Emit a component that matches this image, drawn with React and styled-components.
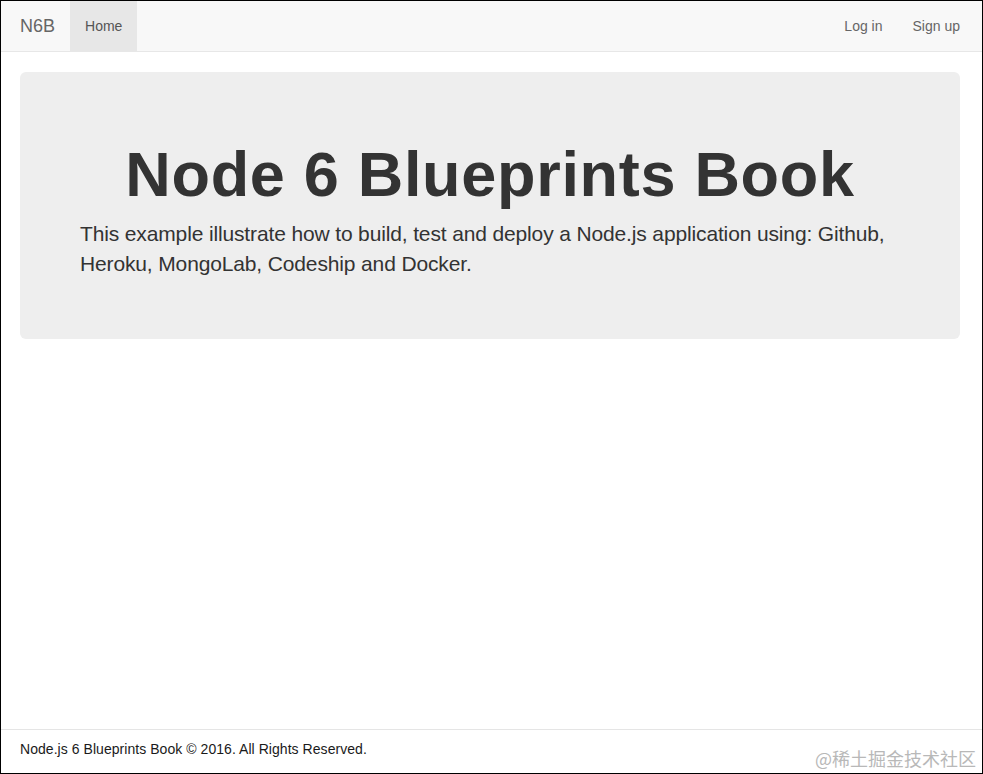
import React from "react"
import styled, { createGlobalStyle } from "styled-components"

const GlobalStyle = createGlobalStyle`
  html, body {
    margin: 0;
    padding: 0;
  }
  body {
    font-family: "Liberation Sans", Arial, sans-serif;
    font-size: 14px;
    line-height: 1.42857;
    color: #333;
    background: #fff;
  }
  * {
    box-sizing: border-box;
  }
`

const navLeft = [{ id: 0, label: "Home", active: true }]
const navRight = [
  { id: 1, label: "Log in" },
  { id: 2, label: "Sign up" },
]

const App = () => {
  return (
    <Page>
      <GlobalStyle />
      <Navbar>
        <NavGroup>
          <Brand href="#">N6B</Brand>
          {navLeft.map(item => (
            <NavLink key={item.id} href="#" $active={item.active}>
              {item.label}
            </NavLink>
          ))}
        </NavGroup>
        <NavGroup>
          {navRight.map(item => (
            <NavLink key={item.id} href="#">
              {item.label}
            </NavLink>
          ))}
        </NavGroup>
      </Navbar>
      <Main>
        <Jumbotron>
          <Title>Node 6 Blueprints Book</Title>
          <Lead>
            This example illustrate how to build, test and deploy a Node.js
            application using: Github, Heroku, MongoLab, Codeship and Docker.
          </Lead>
        </Jumbotron>
      </Main>
      <Footer>
        <p>Node.js 6 Blueprints Book &copy; 2016. All Rights Reserved.</p>
        <Watermark>@稀土掘金技术社区</Watermark>
      </Footer>
    </Page>
  )
}

const Page = styled.div`
  position: relative;
  display: flex;
  flex-direction: column;
  height: 774px;
  width: 983px;
  border: 1px solid #000;
  overflow: hidden;
`

const Navbar = styled.nav`
  display: flex;
  justify-content: space-between;
  height: 51px;
  padding: 0 7px 0 4px;
  background: #f8f8f8;
  border-bottom: 1px solid #e7e7e7;
`

const NavGroup = styled.div`
  display: flex;
  align-items: stretch;
`

const Brand = styled.a`
  padding: 15px;
  font-size: 18px;
  line-height: 20px;
  color: #666;
  text-decoration: none;
`

const NavLink = styled.a`
  padding: 15px;
  line-height: 20px;
  font-size: 14px;
  text-decoration: none;
  color: ${props => (props.$active ? "#555" : "#666")};
  background: ${props => (props.$active ? "#e7e7e7" : "transparent")};
`

const Main = styled.main`
  flex: 1;
  padding: 20px 22px 0 19px;
`

const Jumbotron = styled.section`
  background: #eee;
  border-radius: 6px;
  padding: 48px 60px 45px;
`

const Title = styled.h1`
  margin: 20px 0 10px;
  font-size: 63px;
  line-height: 1.1;
  font-weight: 700;
  letter-spacing: 0.7px;
  color: #333;
  text-align: center;
`

const Lead = styled.p`
  margin: 0 0 15px;
  font-size: 21px;
  line-height: 30px;
  font-weight: 300;
  letter-spacing: -0.14px;
  color: #333;
`

const Footer = styled.footer`
  position: relative;
  height: 44px;
  padding: 9px 19px 0;
  border-top: 1px solid #e5e5e5;
  p {
    margin: 0;
    font-size: 14px;
    line-height: 20px;
    letter-spacing: 0.05px;
    color: #1a1a1a;
  }
`

const Watermark = styled.span`
  position: absolute;
  right: 6px;
  bottom: 3px;
  font-family: "Noto Sans CJK SC", sans-serif;
  font-size: 18px;
  line-height: 24px;
  color: #b8b8b8;
`

export default App
